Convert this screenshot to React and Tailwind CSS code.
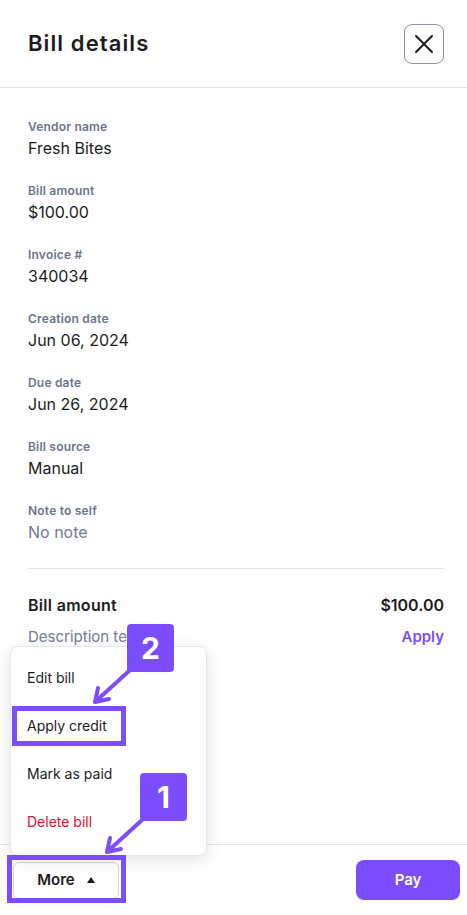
import React from "react"

const FIELDS = [
  { label: "Vendor name", value: "Fresh Bites" },
  { label: "Bill amount", value: "$100.00" },
  { label: "Invoice #", value: "340034" },
  { label: "Creation date", value: "Jun 06, 2024" },
  { label: "Due date", value: "Jun 26, 2024" },
  { label: "Bill source", value: "Manual" },
  { label: "Note to self", value: "No note", muted: true },
]

const MENU = ["Edit bill", "Apply credit", "Mark as paid", "Delete bill"]

function Badge({ n, className }) {
  return (
    <div className={`absolute flex h-[48px] w-[47px] items-center justify-center rounded-[4px] bg-[#7c4dff] text-[30px] font-bold text-white ${className}`}>
      {n}
    </div>
  )
}

export default function App() {
  return (
    <div
      className="relative flex h-[915px] w-[467px] flex-col overflow-hidden bg-white text-[#1c1c1e]"
      style={{ fontFamily: "Inter, 'Open Sans', sans-serif" }}
    >
      <header className="flex h-[88px] shrink-0 items-center justify-between border-b border-[#e4e5ea] pl-7 pr-[23px]">
        <h1 className="text-[22px] font-semibold tracking-[1.1px]">Bill details</h1>
        <button className="flex h-10 w-10 items-center justify-center rounded-lg border border-[#8c93a8]">
          <svg width="22" height="22" viewBox="0 0 22 22" fill="none" stroke="#1c1c1e" strokeWidth="2" strokeLinecap="round">
            <path d="M3 3l16 16M19 3L3 19" />
          </svg>
        </button>
      </header>

      <main className="flex-1 pl-7 pr-[23px] pt-[30px]">
        <div className="flex flex-col gap-[22px]">
          {FIELDS.map((f) => (
            <div key={f.label}>
              <div className="h-[18px] text-[12px] font-semibold leading-[18px] tracking-[0.2px] text-[#6b7391]">{f.label}</div>
              <div className={`h-6 text-[16px] leading-6 ${f.muted ? "text-[#737a94]" : ""}`}>{f.value}</div>
            </div>
          ))}
        </div>
        <div className="mt-6 border-t border-[#e4e5ea]" />
        <div className="mt-[24px] flex items-center justify-between">
          <span className="text-[16px] font-semibold leading-6 tracking-[0.3px]">Bill amount</span>
          <span className="text-[16px] font-semibold leading-6">$100.00</span>
        </div>
        <div className="mt-2 flex items-center justify-between">
          <span className="text-[15px] leading-6 text-[#737a94]">Description text</span>
          <span className="text-[15px] font-semibold leading-6 text-[#7c4dff]">Apply</span>
        </div>
      </main>

      <footer className="flex h-[71px] shrink-0 items-center justify-between border-t border-[#e4e5ea] pl-[13px] pr-[7px]">
        <button className="flex h-[37px] w-[106px] items-center justify-center gap-3 rounded-md border border-[#d5d7de] bg-white text-[15px] font-semibold">
          More
          <svg width="8" height="6" viewBox="0 0 8 6" fill="#1c1c1e"><path d="M4 0l4 6H0z" /></svg>
        </button>
        <button className="h-10 w-[104px] rounded-lg bg-[#7c4dff] text-[15px] font-semibold text-white">Pay</button>
      </footer>

      <div className="absolute left-[10px] top-[646px] w-[197px] rounded-lg border border-[#e6e7ec] bg-white py-2 shadow-[0_4px_16px_rgba(20,20,40,0.12)]">
        {MENU.map((m) => (
          <div key={m} className={`flex h-12 items-center px-4 pb-[3px] text-[14px] ${m === "Delete bill" ? "text-[#e0102f]" : ""}`}>
            {m}
          </div>
        ))}
      </div>

      <div className="absolute left-[12px] top-[706px] h-[40px] w-[114px] border-[5px] border-[#7c4dff]" />
      <div className="absolute left-[7px] top-[855px] h-[48px] w-[119px] border-[5px] border-[#7c4dff]" />

      <Badge n="2" className="left-[127px] top-[624px]" />
      <Badge n="1" className="left-[140px] top-[773px]" />

      <svg className="pointer-events-none absolute left-0 top-0" width="467" height="915" fill="none" stroke="#7c4dff" strokeWidth="4" strokeLinecap="round" strokeLinejoin="round">
        <path d="M129 671L95 702M95 702l3-14M95 702l14-3" />
        <path d="M142 820L107 852M107 852l3-14M107 852l14-3" />
      </svg>
    </div>
  )
}
